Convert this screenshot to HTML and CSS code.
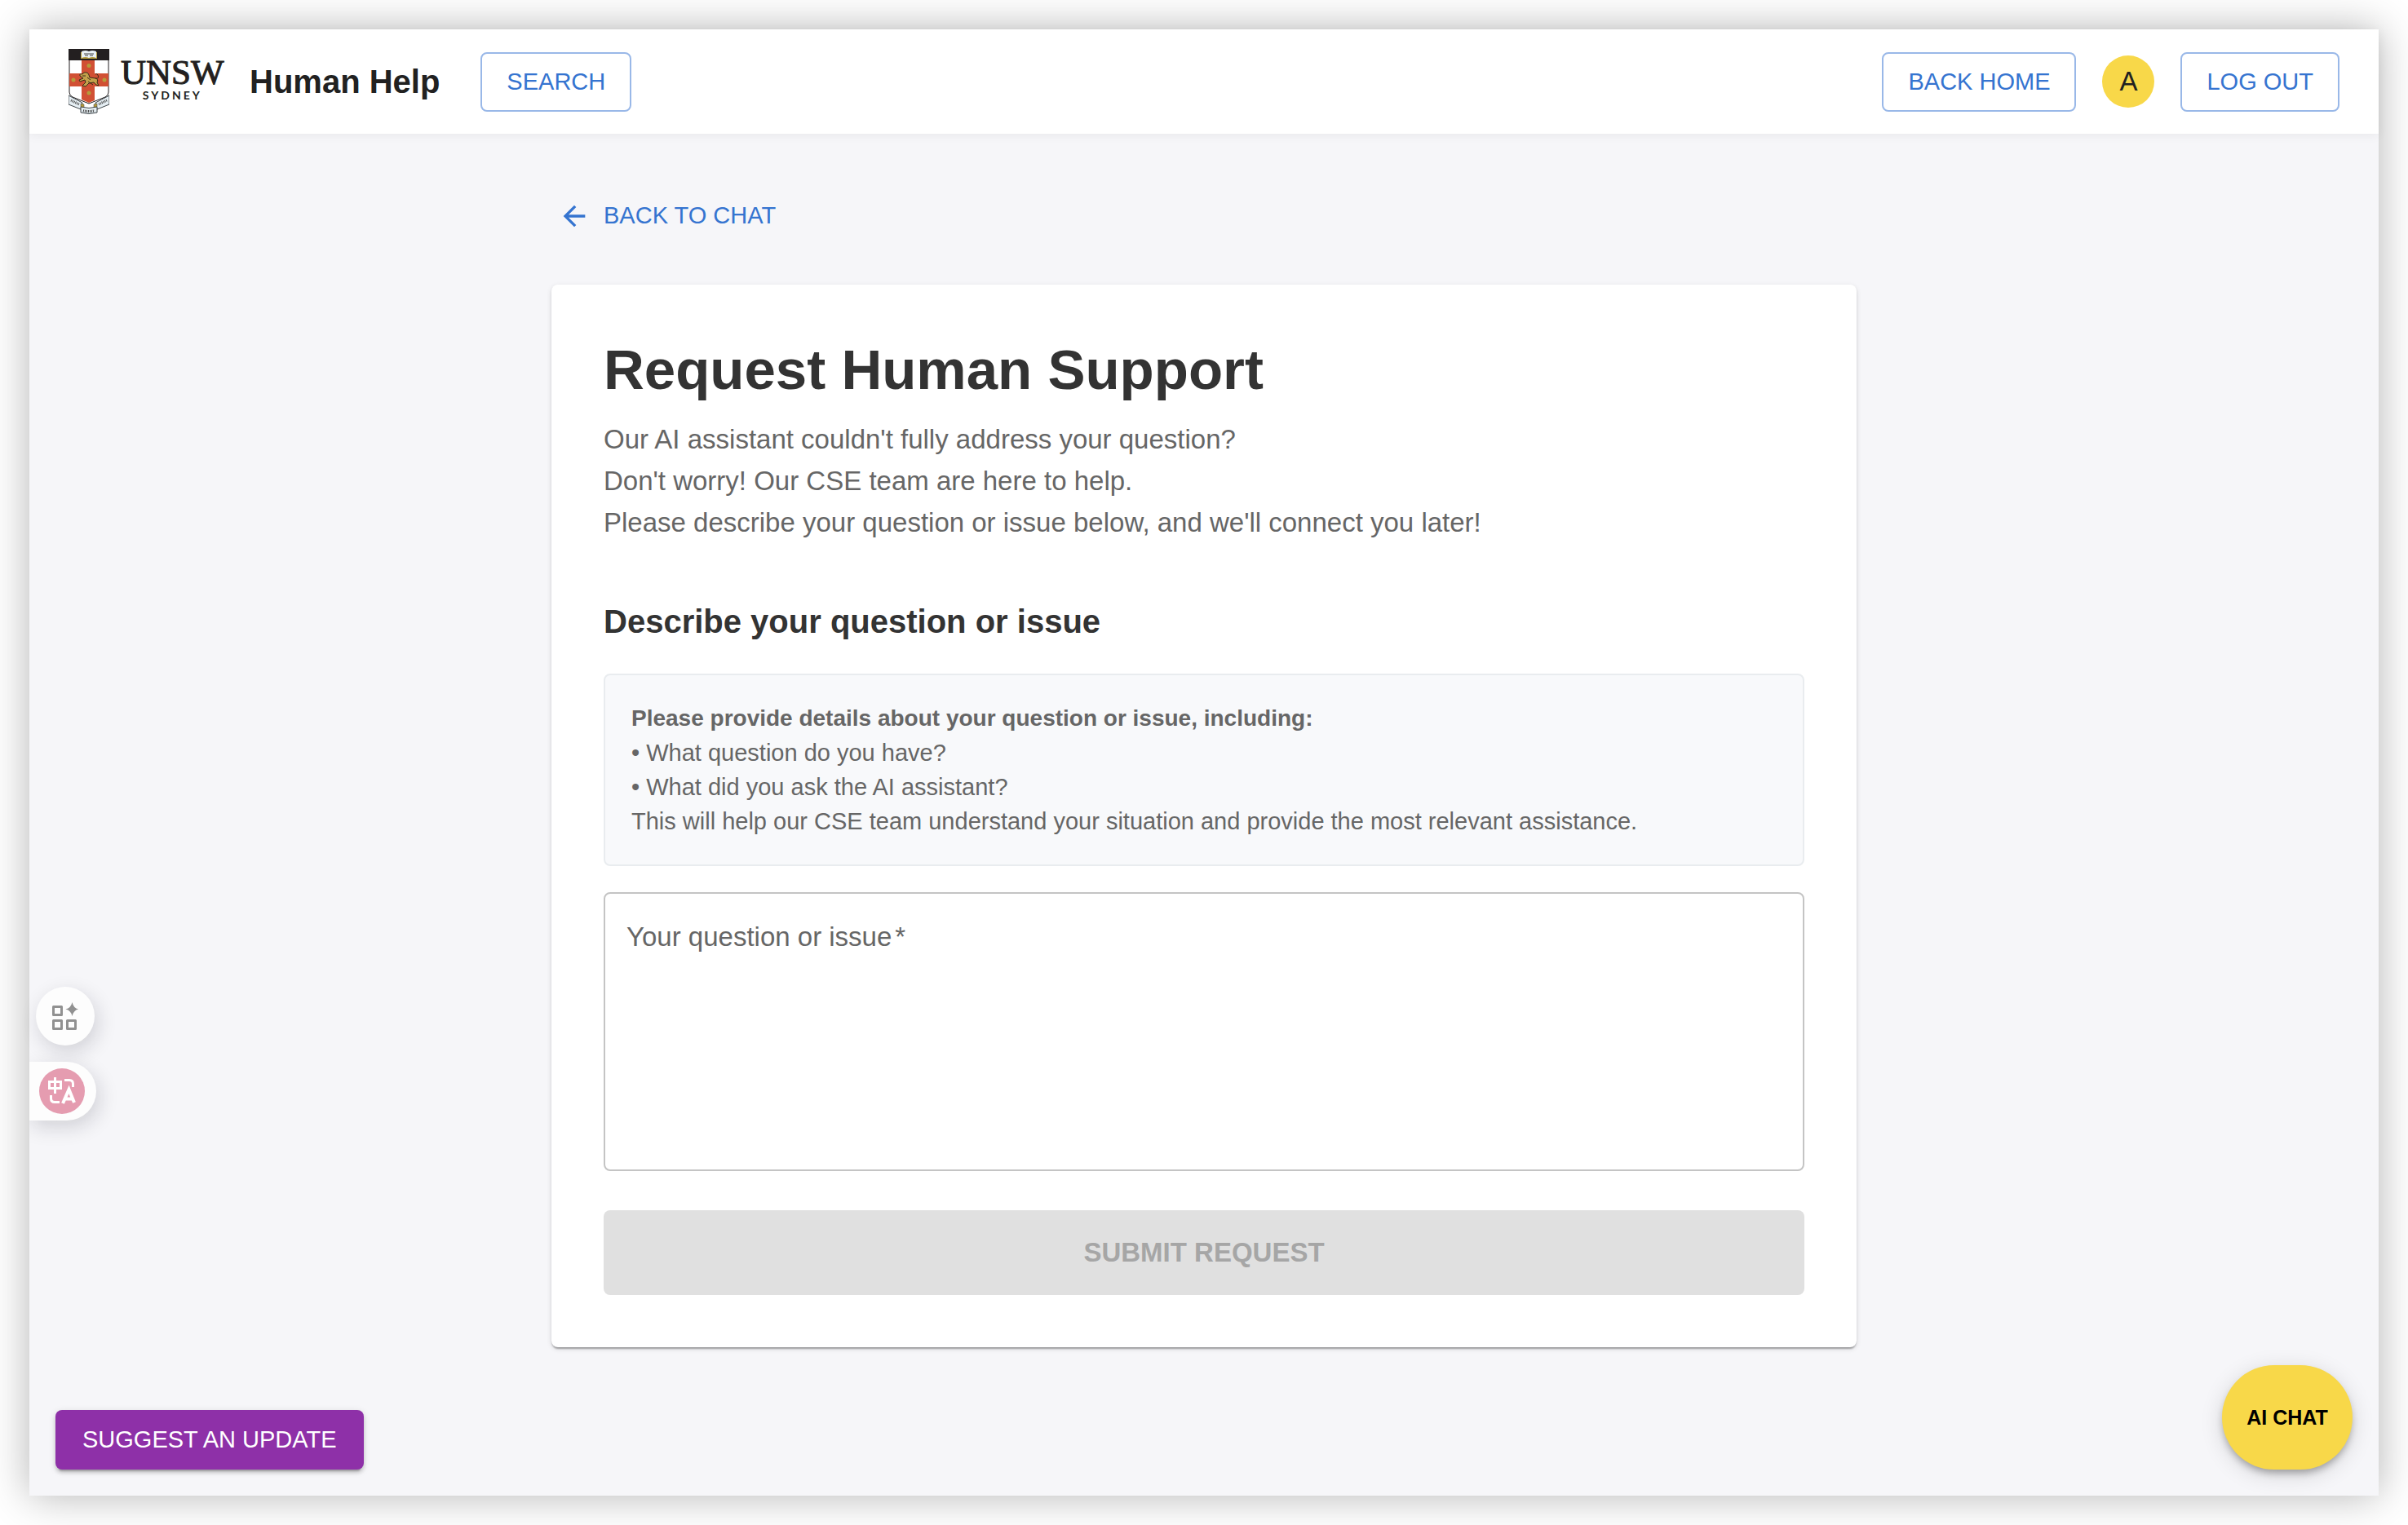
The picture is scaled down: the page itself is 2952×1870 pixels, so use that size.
FILE: index.html
```html
<!DOCTYPE html>
<html lang="en">
<head>
  <meta charset="utf-8">
  <meta name="viewport" content="width=device-width, initial-scale=1">
  <title>Human Help</title>
  <link rel="stylesheet" href="styles.css">
</head>
<body>
  <div class="window">
    <header class="topbar">
      <a class="logo" href="#" aria-label="UNSW Sydney">
        <svg class="crest" viewBox="0 0 50 80" aria-hidden="true">
          <path d="M1 1H49V53Q49 57 45 59L25 67 5 59Q1 57 1 53Z" fill="#fff" stroke="#231f20"/>
          <path d="M16 14H32V63L25 66 16 62ZM1 30H49V46H1Z" fill="#d15034"/>
          <path d="M0 0H50V14H0Z" fill="#231f20"/>
          <path d="M15 4H35V12H15Z" fill="#b59c3b"/>
          <path d="M16 3Q21 1 25 3 29 1 34 3V11Q29 9 25 11 21 9 16 11Z" fill="#e9f1f5"/>
          <path d="M19 6h12M20 8h4m2 0h4" stroke="#444" stroke-width="1"/>
          <g fill="#b59c3b">
            <circle cx="25" cy="20.500" r="2.500"/><circle cx="25" cy="54" r="2.500"/>
            <circle cx="6" cy="38" r="2.500"/><circle cx="44" cy="38" r="2.500"/>
          </g>
          <path d="M14 33Q13 30 17 31L19 29Q24 28 25 32L26 35 33 36Q37 37 35 41L37 45 34 44 31 41 25 42 21 46 17 45 21 41 20 38 14 40 13 38 18 36Z" fill="#c3a24b" stroke="#3a2c1a"/>
          <path d="M33 36Q38 37 36 32 35 30 33 31M24 40l6 4M17 33h4M23 35l4 3" fill="none" stroke="#3a2c1a"/>
          <path d="M0 57 17 66 15 74 0 68ZM50 57 33 66 35 74 50 68Z" fill="#e6eff4" stroke="#3c4347"/>
          <path d="M15 67l4 1v5l-4-2ZM35 67l-4 1v5l4-2Z" fill="#b59c3b" stroke="#3c4347" stroke-width=".5"/>
          <path d="M15 71Q25 74 35 71V78Q25 81 15 78Z" fill="#e6eff4" stroke="#3c4347"/>
          <path d="M3 63l10 5M47 63l-10 5M18 75.500q7 2 14 0" fill="none" stroke="#444" stroke-width="3" stroke-dasharray="1 1"/>
        </svg>
        <span class="wordmark">
          <span class="wordmark-name">UNSW</span>
          <span class="wordmark-city">SYDNEY</span>
        </span>
      </a>
      <span class="app-name">Human Help</span>
      <button class="btn btn-outlined search" type="button">SEARCH</button>
      <nav class="actions">
        <button class="btn btn-outlined" type="button">BACK HOME</button>
        <span class="avatar">A</span>
        <button class="btn btn-outlined" type="button">LOG OUT</button>
      </nav>
    </header>

    <main class="content">
      <a class="back" href="#">
        <svg class="back-icon" viewBox="0 0 24 24" aria-hidden="true"><path d="M20 11H7.830l5.590-5.590L12 4l-8 8 8 8 1.410-1.410L7.830 13H20v-2z" fill="currentColor"/></svg>
        BACK TO CHAT
      </a>
      <section class="card">
        <h1>Request Human Support</h1>
        <p class="intro">Our AI assistant couldn't fully address your question?<br>Don't worry! Our CSE team are here to help.<br>Please describe your question or issue below, and we'll connect you later!</p>
        <h2>Describe your question or issue</h2>
        <div class="hint">
          <strong>Please provide details about your question or issue, including:</strong>
          • What question do you have?<br>
          • What did you ask the AI assistant?<br>
          This will help our CSE team understand your situation and provide the most relevant assistance.
        </div>
        <form>
          <div class="field">
            <label for="issue">Your question or issue<span class="required">*</span></label>
            <textarea id="issue" required></textarea>
          </div>
          <button class="submit" type="submit" disabled>SUBMIT REQUEST</button>
        </form>
      </section>
    </main>

    <div class="side-tools">
      <button class="tool tool-apps" type="button" aria-label="Tools">
        <svg viewBox="0 0 32 34" aria-hidden="true">
          <g fill="none" stroke="#919191" stroke-width="3" stroke-linejoin="round">
            <path d="M1.500 5.500h10v10h-10zM1.500 22.500h10v10h-10zM18.500 22.500h10v10h-10z"/>
          </g>
          <path d="M24.500 0Q26 7 32 8.500 26 10 24.500 17 23 10 16.500 8.500 23 7 24.500 0Z" fill="#919191"/>
        </svg>
      </button>
      <button class="tool tool-translate" type="button" aria-label="Translate">
        <svg viewBox="0 0 56 56" aria-hidden="true">
          <circle cx="28" cy="28" r="28" fill="#e59cb0"/>
          <g fill="none" stroke="#fff" stroke-width="3">
            <path d="M12.500 16.500h14v8h-14zM19.500 11v20M31 14.500h6q4.500 0 4.500 4.500v4M14.500 33v4q0 4.500 4.500 4.500h6"/>
            <path d="M29 43 36.500 26 43 42M32 37.500h9" stroke-width="4"/>
          </g>
        </svg>
      </button>
    </div>

    <button class="btn suggest" type="button">SUGGEST AN UPDATE</button>
    <button class="chat" type="button">AI CHAT</button>
  </div>
</body>
</html>
```
FILE: styles.css
```css
* {
  box-sizing: border-box;
}

body {
  margin: 0;
  padding: 36px;
  min-height: 100vh;
  display: flex;
  background: #fff;
  color: #212121;
  font-family: "Liberation Sans", Arial, sans-serif;
  font-size: 33px;
}

button,
textarea {
  font-family: inherit;
}

h1,
h2,
p {
  margin: 0;
}

.window {
  position: relative;
  flex: 1;
  background: #f6f6f9;
  box-shadow: 0 0 48px rgba(0, 0, 0, 0.3);
}

/* Top bar */
.topbar {
  display: flex;
  align-items: center;
  height: 128px;
  padding: 0 48px;
  background: #fff;
  box-shadow: 0 2px 12px rgba(0, 0, 0, 0.06);
}

.logo {
  display: flex;
  align-items: flex-start;
  gap: 14px;
  width: 222px;
  color: #231f20;
  text-decoration: none;
}

.crest {
  width: 50px;
  height: 80px;
}

.wordmark {
  display: flex;
  flex-direction: column;
  align-items: center;
  padding-top: 8px;
}

.wordmark-name {
  font-family: "Liberation Serif", serif;
  font-size: 43px;
  line-height: 42px;
  -webkit-text-stroke: 1px #231f20;
}

.wordmark-city {
  font-family: Lato, sans-serif;
  font-size: 14px;
  font-weight: 700;
  line-height: 14px;
  letter-spacing: 3px;
}

.app-name {
  font-size: 40px;
  font-weight: 700;
}

.btn {
  height: 73px;
  padding: 0 31px;
  border: 2px solid transparent;
  border-radius: 8px;
  background: none;
  font-size: 29px;
}

.btn-outlined {
  padding: 0 30px;
  border-color: #99b8e8;
  color: #3574d0;
}

.search {
  margin-left: 50px;
}

.actions {
  display: flex;
  align-items: center;
  gap: 32px;
  margin-left: auto;
}

.avatar {
  display: grid;
  place-items: center;
  width: 64px;
  height: 64px;
  border-radius: 50%;
  background: #f8d849;
}

/* Page content */
.content {
  max-width: 1600px;
  margin: 0 auto;
  padding: 64px 0;
}

.back {
  display: inline-flex;
  align-items: center;
  gap: 16px;
  height: 73px;
  padding: 0 8px;
  color: #3574d0;
  font-size: 29px;
  text-decoration: none;
}

.back-icon {
  width: 40px;
  height: 40px;
}

.card {
  margin-top: 48px;
  padding: 64px;
  border-radius: 8px;
  background: #fff;
  box-shadow: 0 4px 2px -2px rgba(0, 0, 0, 0.2), 0 2px 2px rgba(0, 0, 0, 0.14), 0 2px 6px rgba(0, 0, 0, 0.12);
}

h1 {
  color: #333;
  font-size: 69px;
  line-height: 82px;
}

.intro {
  margin-top: 18px;
  color: #666;
  line-height: 51px;
}

h2 {
  margin: 64px 0 32px;
  color: #333;
  font-size: 40px;
  line-height: 64px;
}

.hint {
  padding: 32px;
  border: 2px solid #e9ecef;
  border-radius: 8px;
  background: #f8f9fb;
  color: #666;
  font-size: 29px;
  line-height: 42px;
}

.hint strong {
  display: block;
  font-size: 28px;
}

.field {
  position: relative;
  margin: 32px 0 48px;
}

.field label {
  position: absolute;
  top: 32px;
  left: 28px;
  color: #666;
  line-height: 46px;
}

.required {
  margin-left: 4px;
}

textarea {
  display: block;
  width: 100%;
  height: 342px;
  padding: 32px 28px;
  border: 2px solid #c4c4c4;
  border-radius: 8px;
  background: none;
  font-size: 33px;
  resize: none;
}

.submit {
  display: block;
  width: 100%;
  height: 104px;
  border: 0;
  border-radius: 8px;
  background: #e0e0e0;
  color: #a6a6a6;
  font-size: 33px;
  font-weight: 700;
}

/* Floating controls */
.side-tools {
  position: absolute;
  left: 0;
  top: 1174px;
  display: flex;
  flex-direction: column;
  gap: 20px;
}

.tool {
  display: flex;
  align-items: center;
  height: 72px;
  border: 0;
  background: #fdfdfd;
  box-shadow: 4px 8px 24px rgba(20, 20, 40, 0.16);
}

.tool-apps {
  justify-content: center;
  width: 72px;
  margin-left: 8px;
  padding: 0;
  border-radius: 50%;
}

.tool-apps svg {
  width: 32px;
  height: 34px;
}

.tool-translate {
  width: 82px;
  padding: 0 12px;
  border-radius: 0 36px 36px 0;
  clip-path: inset(-40px -40px -40px 0);
}

.tool-translate svg {
  width: 56px;
  height: 56px;
}

.suggest {
  position: absolute;
  left: 32px;
  bottom: 32px;
  background: #8e30a8;
  color: #fff;
  box-shadow: 0 6px 2px -4px rgba(0, 0, 0, 0.2), 0 4px 4px rgba(0, 0, 0, 0.14), 0 2px 10px rgba(0, 0, 0, 0.12);
}

.chat {
  position: absolute;
  right: 32px;
  bottom: 32px;
  width: 160px;
  height: 128px;
  padding: 0;
  border: 0;
  border-radius: 64px;
  background: #f8d849;
  color: #000;
  font-size: 25px;
  font-weight: 700;
  box-shadow: 0 6px 10px -2px rgba(0, 0, 0, 0.3), 0 6px 28px rgba(0, 0, 0, 0.14);
}
```
